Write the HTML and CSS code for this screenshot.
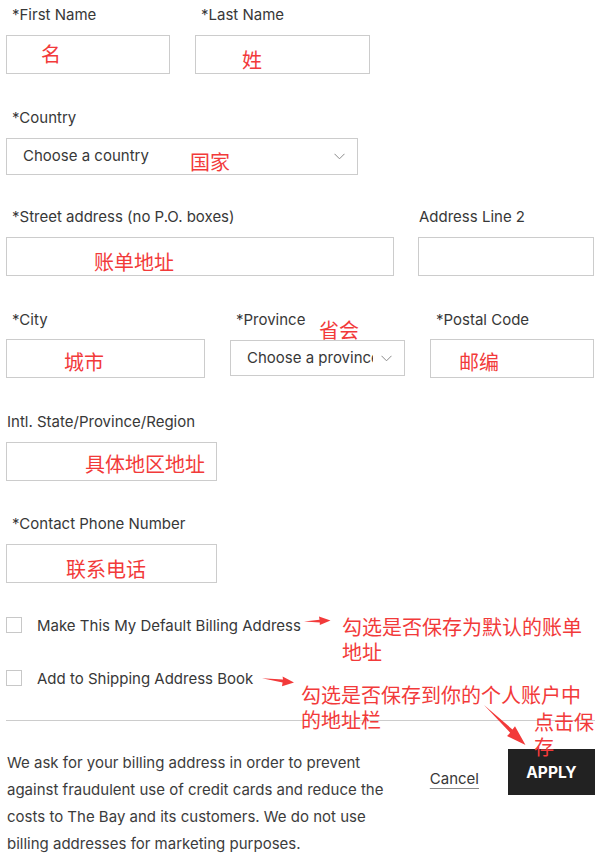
FILE: index.html
```html
<!DOCTYPE html>
<html lang="en">
<head>
<meta charset="utf-8">
<title>Billing Address</title>
<link rel="stylesheet" href="styles.css">
</head>
<body>
<div class="page">
  <form class="form">
    <div class="row row-a">
      <div class="field w164"><label class="label">*First Name</label><input class="input" type="text"></div>
      <div class="field w175"><label class="label">*Last Name</label><input class="input" type="text"></div>
    </div>

    <div class="row row-b">
      <div class="field w352"><label class="label">*Country</label>
        <div class="select select-tall"><span class="select-text">Choose a country</span>
          <svg class="chev" width="11" height="7" viewBox="0 0 11 7"><path d="M0.5 0.8 L5.5 5.8 L10.5 0.8" fill="none" stroke="#8a8a8a" stroke-width="1"/></svg>
        </div>
      </div>
    </div>

    <div class="row row-a row-street">
      <div class="field w388"><label class="label">*Street address (no P.O. boxes)</label><input class="input" type="text"></div>
      <div class="field w176"><label class="label flush">Address Line 2</label><input class="input" type="text"></div>
    </div>

    <div class="row row-a row-city">
      <div class="field w199"><label class="label">*City</label><input class="input" type="text"></div>
      <div class="field w175"><label class="label">*Province</label>
        <div class="select select-short"><span class="select-text">Choose a province</span>
          <svg class="chev" width="11" height="7" viewBox="0 0 11 7"><path d="M0.5 0.8 L5.5 5.8 L10.5 0.8" fill="none" stroke="#8a8a8a" stroke-width="1"/></svg>
        </div>
      </div>
      <div class="field w164"><label class="label">*Postal Code</label><input class="input" type="text"></div>
    </div>

    <div class="row row-c">
      <div class="field w211"><label class="label flush">Intl. State/Province/Region</label><input class="input" type="text"></div>
    </div>

    <div class="row row-a row-last">
      <div class="field w211"><label class="label">*Contact Phone Number</label><input class="input" type="text"></div>
    </div>

    <div class="checks">
      <label class="check"><span class="box"></span><span class="check-text">Make This My Default Billing Address</span></label>
      <label class="check"><span class="box"></span><span class="check-text">Add to Shipping Address Book</span></label>
    </div>

    <div class="divider"></div>

    <div class="footer">
      <p class="note-text">We ask for your billing address in order to prevent against fraudulent use of credit cards and reduce the costs to The Bay and its customers. We do not use billing addresses for marketing purposes.</p>
      <div class="actions">
        <a class="cancel" href="#">Cancel</a>
        <button class="apply" type="button">APPLY</button>
      </div>
    </div>
  </form>

  <span class="note n1">名</span>
  <span class="note n2">姓</span>
  <span class="note n3">国家</span>
  <span class="note n4">账单地址</span>
  <span class="note n5">省会</span>
  <span class="note n6">城市</span>
  <span class="note n7">邮编</span>
  <span class="note n8">具体地区地址</span>
  <span class="note n9">联系电话</span>
  <span class="note n10">勾选是否保存为默认的账单地址</span>
  <span class="note n11">勾选是否保存到你的个人账户中的地址栏</span>
  <span class="note n12">点击保存</span>

  <svg class="arrows" width="601" height="863" viewBox="0 0 601 863">
    <polygon points="304,621.4 319.5,619.8 319,616.4 330.5,620.4 319.8,625 319.8,622.4" fill="#f23a3a"/>
    <polygon points="262,678.2 283,679.6 282.6,676.4 294,682.6 282,686.2 282.6,682.6" fill="#f23a3a"/>
    <polygon points="484,705 512.5,729.5 515,726.2 525.5,745 507,736 510.2,732.8" fill="#f23a3a"/>
  </svg>
</div>
</body>
</html>
```

FILE: styles.css
```css
html, body {
  margin: 0;
  padding: 0;
  background: #ffffff;
}

body {
  font-family: Inter, "Liberation Sans", Arial, sans-serif;
  color: #383838;
}

.page {
  position: relative;
  width: 601px;
  height: 863px;
  overflow: hidden;
}

.form {
  padding: 4px 6px 0 6px;
}

.row {
  display: flex;
  gap: 25px;
  margin-bottom: 33px;
}

.row-b { margin-bottom: 31px; }
.row-c { margin-bottom: 32px; }
.row-last { margin-bottom: 34px; }
.row-street { gap: 24px; }

.field {
  display: flex;
  flex-direction: column;
}

.w164 { width: 164px; }
.w175 { width: 175px; }
.w176 { width: 176px; }
.w199 { width: 199px; }
.w211 { width: 211px; }
.w352 { width: 352px; }
.w388 { width: 388px; }

.label {
  display: block;
  font-size: 15px;
  line-height: 20px;
  padding: 1px 0 0 6px;
  margin-bottom: 10px;
  color: #383838;
  white-space: nowrap;
}

.label.flush { padding-left: 1px; }

.row-city .label { margin-bottom: 9px; }

.input {
  display: block;
  box-sizing: border-box;
  width: 100%;
  height: 39px;
  margin: 0;
  padding: 0 10px;
  border: 1px solid #cccccc;
  border-radius: 0;
  background: #ffffff;
  outline: none;
  font: inherit;
}

.select {
  box-sizing: border-box;
  display: flex;
  align-items: center;
  width: 100%;
  border: 1px solid #cccccc;
  padding: 0 12px 0 16px;
  font-size: 15px;
  color: #383838;
  background: #ffffff;
}

.select-tall { height: 37px; }
.select-short { height: 36px; margin-top: 1px; padding-right: 12px; }

.select-text {
  flex: 1;
  white-space: nowrap;
  overflow: hidden;
  margin-top: -2px;
}

.select-short .select-text { margin-right: 8px; }

.chev { flex: none; }

.checks {
  display: flex;
  flex-direction: column;
  gap: 37px;
}

.check {
  display: flex;
  align-items: center;
  height: 16px;
}

.box {
  box-sizing: border-box;
  width: 16px;
  height: 16px;
  border: 1px solid #c8c8c8;
  background: #ffffff;
  flex: none;
}

.check-text {
  margin-left: 15px;
  margin-top: 2px;
  font-size: 15px;
  line-height: 20px;
  color: #383838;
}

.divider {
  height: 1px;
  background: #cccccc;
  margin-top: 34px;
}

.footer {
  display: flex;
  align-items: flex-start;
  margin-top: 28px;
}

.note-text {
  margin: 0;
  padding-left: 1px;
  width: 388px;
  font-size: 15px;
  line-height: 27px;
  color: #3c3c3c;
}

.actions {
  margin-left: auto;
  display: flex;
  align-items: center;
  height: 46px;
}

.cancel {
  font-size: 15px;
  color: #383838;
  text-decoration: underline;
  text-decoration-color: #8c8c8c;
  text-underline-offset: 4px;
  margin-right: 29px;
  margin-top: 12px;
}

.apply {
  width: 87px;
  height: 46px;
  border: 0;
  border-radius: 0;
  background: #222222;
  color: #ffffff;
  font-family: Inter, "Liberation Sans", Arial, sans-serif;
  font-weight: 700;
  font-size: 15.5px;
  padding: 0;
}

/* annotation layer */
.note {
  position: absolute;
  color: #f23a3a;
  font-family: "Noto Sans CJK SC", "Noto Sans CJK JP", sans-serif;
  font-size: 20px;
  line-height: 25px;
  white-space: nowrap;
}

.n1 { left: 41px; top: 41px; }
.n2 { left: 242px; top: 47px; }
.n3 { left: 190px; top: 149px; }
.n4 { left: 94px; top: 249px; }
.n5 { left: 319px; top: 317px; }
.n6 { left: 64px; top: 349px; }
.n7 { left: 459px; top: 349px; }
.n8 { left: 85px; top: 451px; }
.n9 { left: 66px; top: 556px; }
.n10 { left: 342px; top: 614px; width: 242px; white-space: normal; }
.n11 { left: 301px; top: 682px; width: 282px; white-space: normal; }
.n12 { left: 534px; top: 709px; width: 62px; white-space: normal; }

.arrows {
  position: absolute;
  left: 0;
  top: 0;
  pointer-events: none;
}
```
